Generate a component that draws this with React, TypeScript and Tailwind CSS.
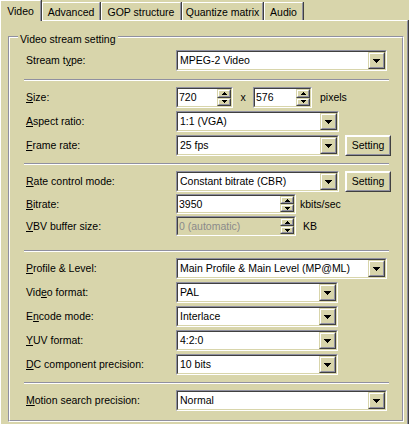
import React from 'react';

// classic 3D palette
// face #d8d5ab, shadow #9090a0, dark #404040

const U: React.FC<{ children: React.ReactNode }> = ({ children }) => (
  <span className="underline underline-offset-[1px] decoration-1">{children}</span>
);

const DownArrow = () => (
  <svg width="7" height="4" viewBox="0 0 7 4" shapeRendering="crispEdges">
    <path d="M0 0h7v1H0zM1 1h5v1H1zM2 2h3v1H2zM3 3h1v1H3z" fill="#000" />
  </svg>
);

const SpinUp = () => (
  <svg width="5" height="3" viewBox="0 0 5 3" shapeRendering="crispEdges">
    <path d="M2 0h1v1H2zM1 1h3v1H1zM0 2h5v1H0z" fill="#000" />
  </svg>
);

const SpinDown = () => (
  <svg width="5" height="3" viewBox="0 0 5 3" shapeRendering="crispEdges">
    <path d="M0 0h5v1H0zM1 1h3v1H1zM2 2h1v1H2z" fill="#000" />
  </svg>
);

interface BoxProps {
  className?: string;
  children?: React.ReactNode;
  disabled?: boolean;
}

const Sunken: React.FC<BoxProps> = ({ className = '', children, disabled }) => (
  <div className={`shrink-0 border border-t-[#9090a0] border-l-[#9090a0] border-r-white border-b-white ${className}`}>
    <div
      className={`h-full flex border border-t-[#404040] border-l-[#404040] border-r-[#d8d5ab] border-b-[#d8d5ab] ${
        disabled ? 'bg-[#d8d5ab]' : 'bg-white'
      }`}
    >
      {children}
    </div>
  </div>
);

const Raised: React.FC<BoxProps> = ({ className = '', children }) => (
  <div className={`shrink-0 border border-t-[#d8d5ab] border-l-[#d8d5ab] border-r-[#404040] border-b-[#404040] ${className}`}>
    <div className="h-full w-full flex items-center justify-center border border-t-white border-l-white border-r-[#9090a0] border-b-[#9090a0] bg-[#d8d5ab]">
      {children}
    </div>
  </div>
);

const Combo: React.FC<{ w: string; value: string }> = ({ w, value }) => (
  <Sunken className={`h-[21px] ${w}`}>
    <div className="flex-1 pl-[2px] flex items-center whitespace-nowrap overflow-hidden">{value}</div>
    <Raised className="w-[17px] h-full">
      <DownArrow />
    </Raised>
  </Sunken>
);

const SpinEdit: React.FC<{ w: string; h: string; value: string; disabled?: boolean }> = ({ w, h, value, disabled }) => (
  <Sunken className={`${w} ${h}`} disabled={disabled}>
    <div className={`flex-1 pl-[1px] flex items-center whitespace-nowrap ${disabled ? 'text-[#8a8a8a]' : ''}`}>{value}</div>
    <div className="w-[14px] h-full flex flex-col">
      <Raised className="flex-1">
        <SpinUp />
      </Raised>
      <Raised className="flex-1">
        <SpinDown />
      </Raised>
    </div>
  </Sunken>
);

const Button: React.FC<{ label: string }> = ({ label }) => (
  <Raised className="ml-[6px] w-[46px] h-[21px] border-t-white border-l-white">
    <span className="whitespace-nowrap">{label}</span>
  </Raised>
);

const Label: React.FC<{ children: React.ReactNode }> = ({ children }) => (
  <div className="w-[150px] shrink-0 whitespace-nowrap">{children}</div>
);

const Separator: React.FC<{ mt: string }> = ({ mt }) => (
  <div className={`-ml-[2px] w-[365px] h-[2px] border-t border-t-[#9090a0] border-b border-b-white ${mt}`} />
);

const tabs = [
  { label: 'Video', w: 'w-[42px]', selected: true },
  { label: 'Advanced', w: 'w-[59px]' },
  { label: 'GOP structure', w: 'w-[81px]' },
  { label: 'Quantize matrix', w: 'w-[82px]' },
  { label: 'Audio', w: 'w-[40px]' },
];

export default function App() {
  return (
    <div className="w-[409px] h-[424px] overflow-hidden bg-[#d8d5ab] text-black text-[10.5px] leading-[13px] font-['Liberation_Sans',Arial,sans-serif]">
      {/* tab strip */}
      <div className="flex items-start h-[20px]">
        {tabs.map((t) =>
          t.selected ? (
            <div key={t.label} className={`relative z-10 h-[21px] ${t.w} border-r border-r-[#404040] bg-[#d8d5ab]`}>
              <div className="h-full flex justify-center pt-[4px] border-l border-t border-l-white border-t-white border-r border-r-[#9090a0]">
                {t.label}
              </div>
            </div>
          ) : (
            <div key={t.label} className={`mt-[2px] h-[18px] ${t.w} border-r border-r-[#404040]`}>
              <div className="h-full flex justify-center pt-[3px] border-l border-t border-l-white border-t-white border-r border-r-[#9090a0]">
                {t.label}
              </div>
            </div>
          )
        )}
      </div>

      {/* tab panel */}
      <div className="h-[404px] border-r border-r-[#404040]">
        <div className="h-full pl-[7px] pt-[15px] border-l border-t border-l-white border-t-white border-r border-r-[#9090a0]">
          {/* group box */}
          <div className="relative w-[396px] h-[386px] border border-t-[#9090a0] border-l-[#9090a0] border-r-white border-b-white">
            <div className="absolute left-[9px] -top-[4px] px-[2px] bg-[#d8d5ab] whitespace-nowrap">Video stream setting</div>
            <div className="h-full flex flex-col pt-[12px] pl-[16px] border border-t-white border-l-white border-r-[#9090a0] border-b-[#9090a0]">
              <div className="flex items-center h-[21px]">
                <Label>
                  Stream t<U>y</U>pe:
                </Label>
                <Combo w="w-[211px]" value="MPEG-2 Video" />
              </div>

              <Separator mt="mt-[8px]" />

              <div className="flex items-center h-[21px] mt-[6px]">
                <Label>
                  <U>S</U>ize:
                </Label>
                <SpinEdit w="w-[57px]" h="h-[21px]" value="720" />
                <span className="w-[20px] text-center">x</span>
                <SpinEdit w="w-[59px]" h="h-[21px]" value="576" />
                <span className="ml-[8px]">pixels</span>
              </div>

              <div className="flex items-center h-[21px] mt-[3px]">
                <Label>
                  <U>A</U>spect ratio:
                </Label>
                <Combo w="w-[163px]" value="1:1 (VGA)" />
              </div>

              <div className="flex items-center h-[21px] mt-[3px]">
                <Label>
                  <U>F</U>rame rate:
                </Label>
                <Combo w="w-[163px]" value="25 fps" />
                <Button label="Setting" />
              </div>

              <Separator mt="mt-[7px]" />

              <div className="flex items-center h-[21px] mt-[6px]">
                <Label>
                  <U>R</U>ate control mode:
                </Label>
                <Combo w="w-[163px]" value="Constant bitrate (CBR)" />
                <Button label="Setting" />
              </div>

              <div className="flex items-center h-[20px] mt-[2px]">
                <Label>
                  <U>B</U>itrate:
                </Label>
                <SpinEdit w="w-[120px]" h="h-[20px]" value="3950" />
                <span className="ml-[4px]">kbits/sec</span>
              </div>

              <div className="flex items-center h-[20px] mt-[2px]">
                <Label>
                  <U>V</U>BV buffer size:
                </Label>
                <SpinEdit w="w-[120px]" h="h-[20px]" value="0 (automatic)" disabled />
                <span className="ml-[7px]">KB</span>
              </div>

              <Separator mt="mt-[14px]" />

              <div className="flex items-center h-[21px] mt-[6px]">
                <Label>
                  <U>P</U>rofile &amp; Level:
                </Label>
                <Combo w="w-[211px]" value="Main Profile & Main Level (MP@ML)" />
              </div>

              <div className="flex items-center h-[21px] mt-[3px]">
                <Label>
                  Vid<U>e</U>o format:
                </Label>
                <Combo w="w-[162px]" value="PAL" />
              </div>

              <div className="flex items-center h-[21px] mt-[3px]">
                <Label>
                  E<U>n</U>code mode:
                </Label>
                <Combo w="w-[162px]" value="Interlace" />
              </div>

              <div className="flex items-center h-[21px] mt-[3px]">
                <Label>
                  <U>Y</U>UV format:
                </Label>
                <Combo w="w-[162px]" value="4:2:0" />
              </div>

              <div className="flex items-center h-[21px] mt-[3px]">
                <Label>
                  <U>D</U>C component precision:
                </Label>
                <Combo w="w-[162px]" value="10 bits" />
              </div>

              <Separator mt="mt-[7px]" />

              <div className="flex items-center h-[21px] mt-[6px]">
                <Label>
                  <U>M</U>otion search precision:
                </Label>
                <Combo w="w-[211px]" value="Normal" />
              </div>
            </div>
          </div>
        </div>
      </div>
    </div>
  );
}
